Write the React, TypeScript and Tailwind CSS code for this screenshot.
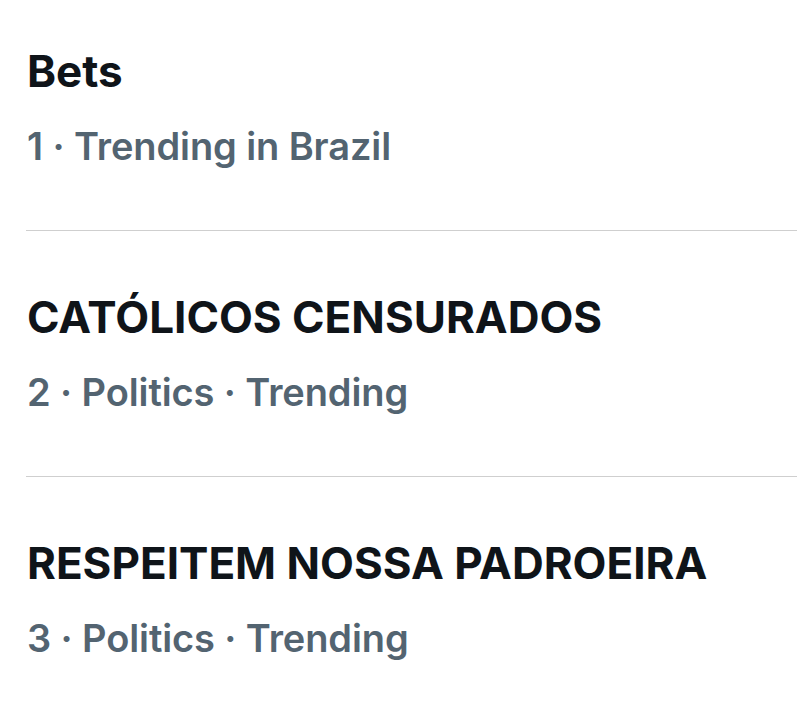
const trends = [
  { rank: 1, title: "Bets", meta: ["Trending in Brazil"] },
  { rank: 2, title: "CATÓLICOS CENSURADOS", meta: ["Politics", "Trending"] },
  { rank: 3, title: "RESPEITEM NOSSA PADROEIRA", meta: ["Politics", "Trending"] },
];

export default function App() {
  return (
    <div className="min-h-screen bg-white pt-[47px] font-['Inter',sans-serif]">
      {trends.map((t, i) => (
        <div key={t.rank}>
          {i > 0 && <div className="ml-[26px] h-px bg-[#cfcfcf]" />}
          <div className={`pl-[27px] pb-[60px] ${i > 0 ? "pt-[62px]" : ""}`}>
            <div className="text-[44px] leading-[48px] font-bold text-[#0f1419]">
              {t.title}
            </div>
            <div className="mt-[27px] text-[38px] leading-[48px] font-semibold text-[#536471] tracking-[-0.1px]">
              {t.rank} · {t.meta.join(" · ")}
            </div>
          </div>
        </div>
      ))}
    </div>
  );
}
